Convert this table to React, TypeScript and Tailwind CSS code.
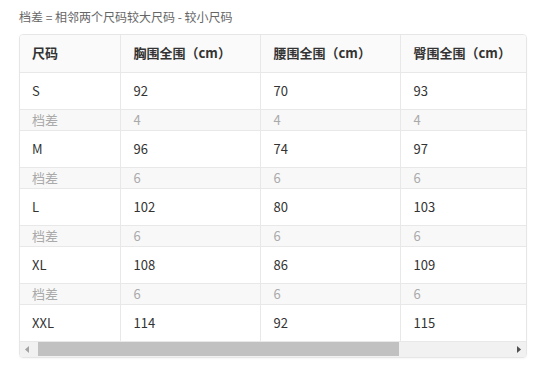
import React from "react";

const rows = [
  { size: "S", chest: "92", waist: "70", hip: "93", diff: ["4", "4", "4"] },
  { size: "M", chest: "96", waist: "74", hip: "97", diff: ["6", "6", "6"] },
  { size: "L", chest: "102", waist: "80", hip: "103", diff: ["6", "6", "6"] },
  { size: "XL", chest: "108", waist: "86", hip: "109", diff: ["6", "6", "6"] },
  { size: "XXL", chest: "114", waist: "92", hip: "115", diff: null },
];

export default function App() {
  return (
    <div
      className="relative w-[545px] h-[374px] bg-white overflow-hidden text-[#333]"
      style={{ fontFamily: '"Noto Sans CJK SC", "Noto Sans", sans-serif' }}
    >
      <div className="pl-[19px] pt-[8px] h-[34px] text-[12px] leading-[18px] text-[#666]">
        档差 = 相邻两个尺码较大尺码 - 较小尺码
      </div>

      <div className="ml-[19px] w-[508px] border border-[#e6e6e6] rounded-[4px] overflow-hidden shadow-[0_1px_2px_rgba(0,0,0,0.04)]">
        <div className="overflow-hidden">
          <table className="w-[668px] table-fixed border-collapse text-[13px] leading-[18px]">
            <colgroup>
              <col className="w-[100px]" />
              <col className="w-[140px]" />
              <col className="w-[140px]" />
              <col className="w-[140px]" />
              <col className="w-[148px]" />
            </colgroup>
            <thead>
              <tr className="h-[37px] bg-[#fafafa]">
                <th className="text-left font-bold pl-[12px] border-b border-r border-[#e8e8e8]">尺码</th>
                <th className="text-left font-bold pl-[13px] border-b border-r border-[#e8e8e8]">胸围全围（cm）</th>
                <th className="text-left font-bold pl-[13px] border-b border-r border-[#e8e8e8]">腰围全围（cm）</th>
                <th className="text-left font-bold pl-[13px] border-b border-r border-[#e8e8e8]">臀围全围（cm）</th>
                <th className="border-b border-[#e8e8e8]"></th>
              </tr>
            </thead>
            <tbody>
              {rows.map((r) => (
                <React.Fragment key={r.size}>
                  <tr className="h-[37px]">
                    <td className="pl-[12px] border-b border-r border-[#e8e8e8]">{r.size}</td>
                    <td className="pl-[13px] border-b border-r border-[#e8e8e8]">{r.chest}</td>
                    <td className="pl-[13px] border-b border-r border-[#e8e8e8]">{r.waist}</td>
                    <td className="pl-[13px] border-b border-r border-[#e8e8e8]">{r.hip}</td>
                    <td className="border-b border-[#e8e8e8]"></td>
                  </tr>
                  {r.diff && (
                    <tr className="h-[21px] bg-[#f8f8f8] text-[#aaa]">
                      <td className="pl-[12px] border-b border-r border-[#e8e8e8]">档差</td>
                      {r.diff.map((d, i) => (
                        <td key={i} className="pl-[13px] border-b border-r border-[#e8e8e8]">{d}</td>
                      ))}
                      <td className="border-b border-[#e8e8e8]"></td>
                    </tr>
                  )}
                </React.Fragment>
              ))}
            </tbody>
          </table>
        </div>

        {/* scrollbar */}
        <div className="flex h-[15px] bg-[#f1f1f1]">
          <div className="w-[15px] flex items-center justify-center">
            <svg width="5" height="7" viewBox="0 0 5 7">
              <path d="M4 0 L0 3.5 L4 7 Z" fill="#a3a3a3" />
            </svg>
          </div>
          <div className="flex-1 flex items-center">
            <div className="h-[14px] w-[361px] ml-[3px] bg-[#c1c1c1]" />
          </div>
          <div className="w-[15px] flex items-center justify-center">
            <svg width="5" height="7" viewBox="0 0 5 7">
              <path d="M1 0 L5 3.5 L1 7 Z" fill="#505050" />
            </svg>
          </div>
        </div>
      </div>
    </div>
  );
}
